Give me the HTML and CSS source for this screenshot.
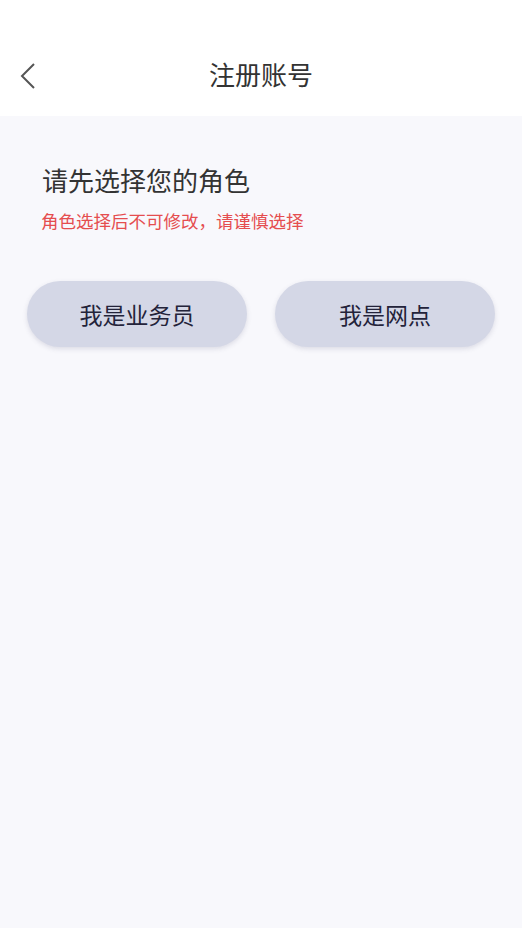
FILE: index.html
```html
<!DOCTYPE html>
<html lang="zh-CN">
<head>
    <meta charset="UTF-8">
    <meta name="viewport" content="width=device-width, initial-scale=1.0">
    <title>注册账号</title>
    <link rel="stylesheet" href="styles.css">
</head>
<body>
    <div class="header">
        <div class="back-btn">
            <svg width="18" height="28" viewBox="0 0 18 28">
                <path d="M15 2 L3 14 L15 26" fill="none" stroke="#555" stroke-width="2" stroke-linejoin="miter"/>
            </svg>
        </div>
        <h1 class="title">注册账号</h1>
    </div>
    <div class="content">
        <div class="intro">
            <h2 class="intro-title">请先选择您的角色</h2>
            <p class="intro-tip">角色选择后不可修改，请谨慎选择</p>
        </div>
        <div class="role-list">
            <button type="button" class="role-btn">我是业务员</button>
            <button type="button" class="role-btn">我是网点</button>
        </div>
    </div>
</body>
</html>
```

FILE: styles.css
```css
html, body {
    height: 100%;
}
body {
    margin: 0;
    font-family: "Noto Sans CJK SC", "Noto Sans", sans-serif;
    background-color: #f8f8fc;
    display: flex;
    flex-direction: column;
}
.header {
    background-color: #fff;
    height: 116px;
    box-sizing: border-box;
    padding-top: 32px;
    position: relative;
    display: flex;
    align-items: center;
    justify-content: center;
    flex-shrink: 0;
}
.back-btn {
    position: absolute;
    left: 19px;
    top: 62px;
    width: 18px;
    height: 28px;
}
.back-btn svg {
    display: block;
}
.title {
    margin: 0;
    font-size: 26px;
    font-weight: normal;
    color: #333;
    line-height: 1;
}
.content {
    flex: 1;
    padding: 0 27px;
}
.intro {
    padding: 48px 0 0 15px;
}
.intro-title {
    margin: 0;
    font-size: 26px;
    font-weight: normal;
    color: #333;
    line-height: 32px;
}
.intro-tip {
    margin: 13px 0 0 -1px;
    font-size: 17.5px;
    color: #e54d4f;
    line-height: 24px;
}
.role-list {
    display: flex;
    gap: 28px;
    margin-top: 48px;
}
.role-btn {
    flex: 1;
    height: 66px;
    border: none;
    border-radius: 33px;
    background-color: #d4d7e6;
    box-shadow: 0 2px 5px rgba(60, 60, 100, 0.15);
    font-family: inherit;
    font-size: 23px;
    color: #23233a;
    cursor: pointer;
}
```
